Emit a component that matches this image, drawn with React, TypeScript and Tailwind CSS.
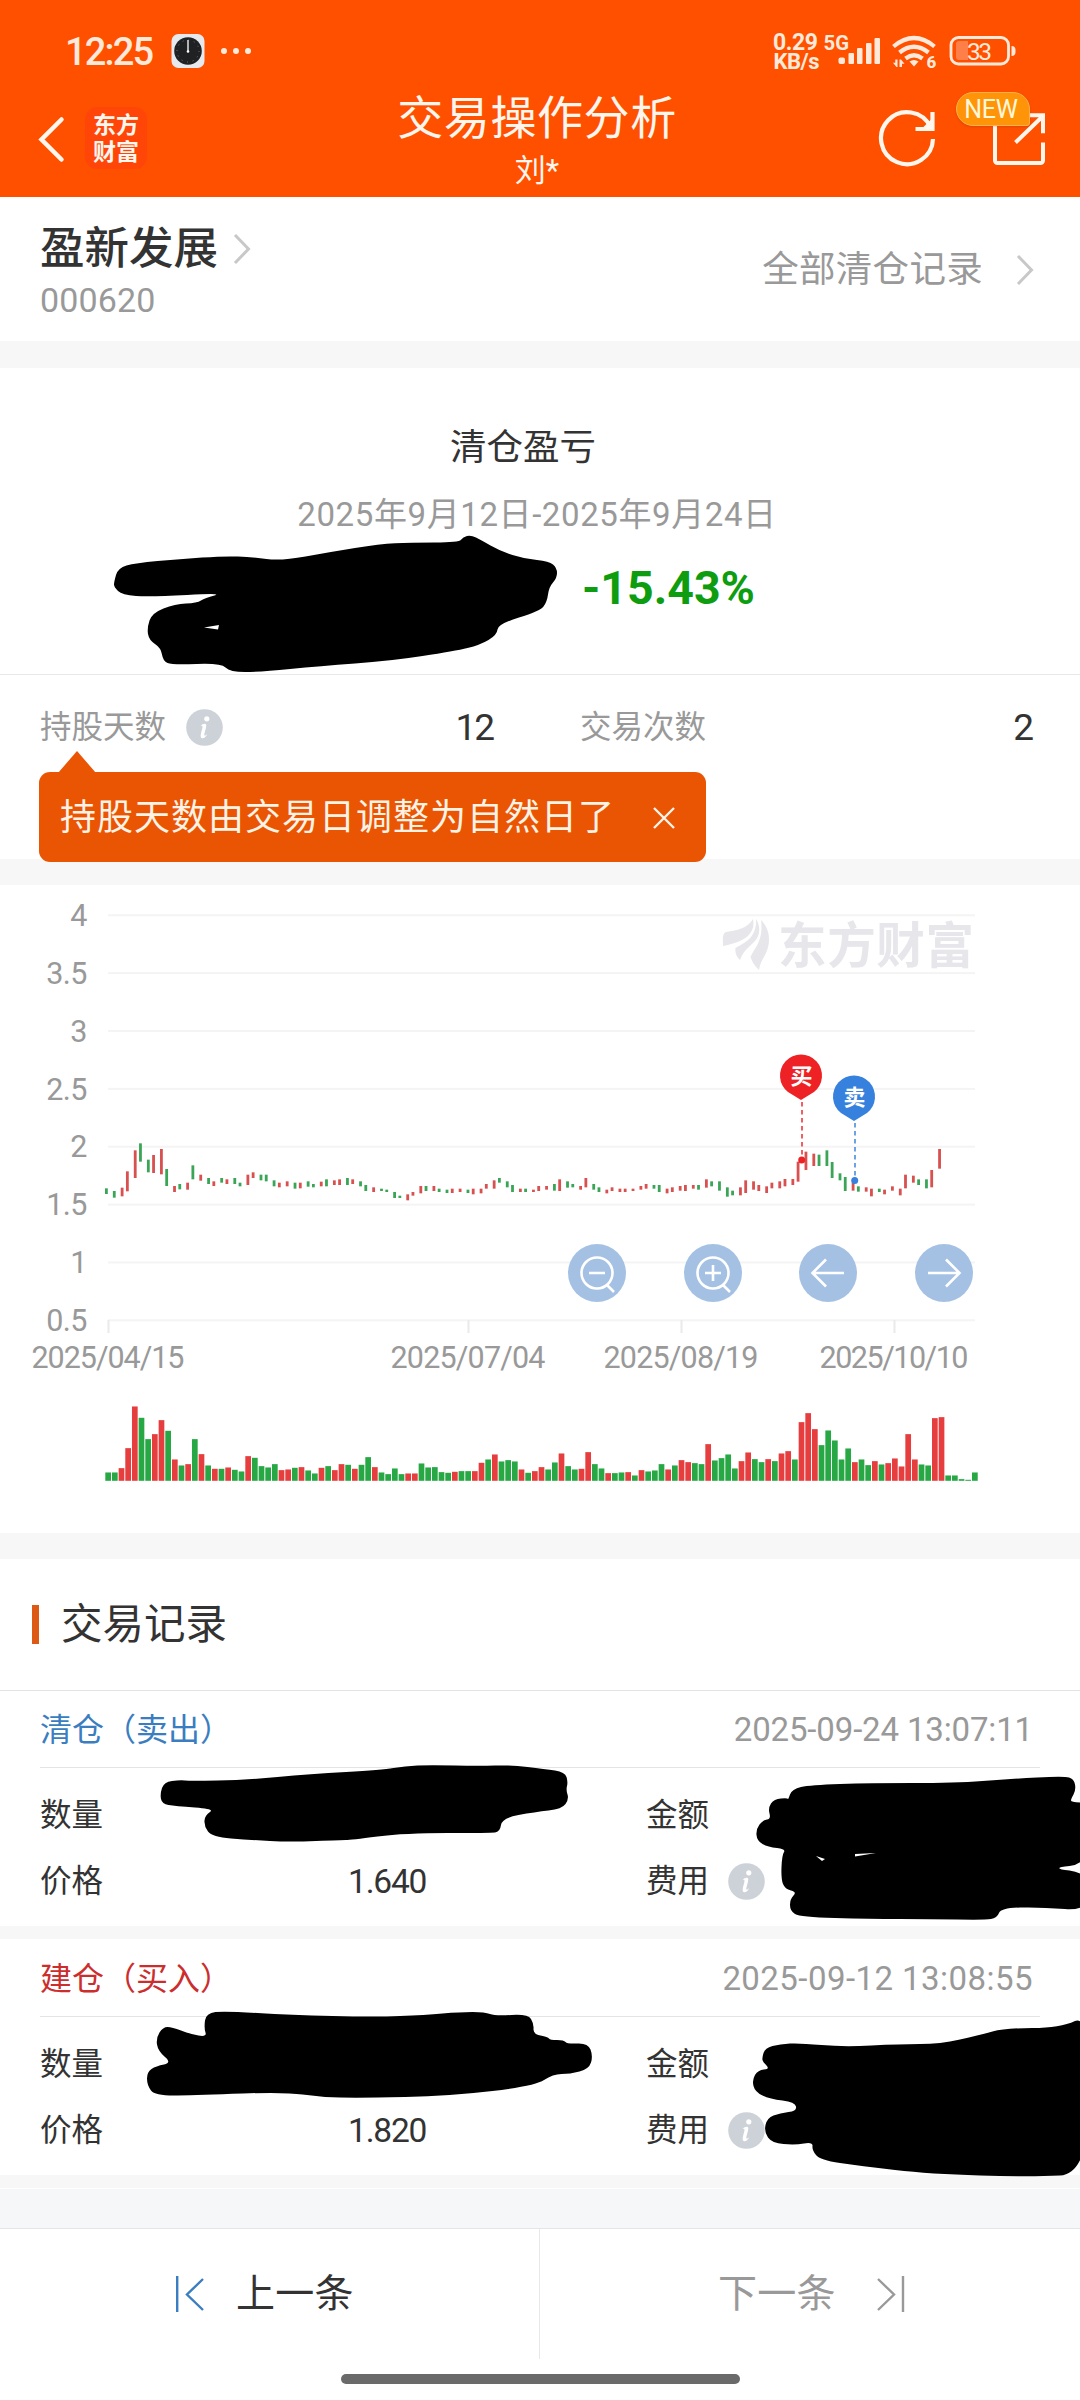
import type { ReactNode } from 'react';

const UP = '#e63e3f';
const DOWN = '#28a745';

// "top-bottom" of each daily candle, in thirds of a pixel below y = 1120; r = up, g = down
const candles =
  'g205-222 g213-233 r203-229 r154-214 r91-174 g70-125 g119-157 r105-159 r87-163 g147-198 r198-216 g192-208 r188-209 g136-178 r164-182 ' +
  'g174-192 r184-198 g174-188 r178-192 g174-192 g188-199 r164-195 r157-174 g164-181 g164-184 g181-199 r188-202 r184-199 g188-206 r188-205 ' +
  'g184-200 g192-202 r185-199 g178-199 r181-195 r178-195 g174-195 r178-192 g184-199 g195-213 r202-216 g206-213 g209-216 g216-234 g227-234 ' +
  'r223-241 r216-227 r198-220 g198-213 r198-213 g206-216 g209-219 r206-219 r206-216 g209-219 r206-223 r206-220 r192-206 r181-206 g174-188 ' +
  'g184-202 g195-216 r206-216 g206-216 r209-216 r198-213 r198-209 g192-212 r178-213 g184-203 g192-202 r198-209 r174-202 g192-209 g202-216 ' +
  'r209-220 r202-213 r206-216 r206-216 r206-213 r198-209 r192-206 g195-206 g195-216 r206-220 r202-216 r198-212 r195-213 r195-206 g195-209 ' +
  'r178-203 g184-199 g184-212 g202-230 g212-226 r202-226 r181-219 r184-209 r195-213 r199-219 r188-205 r184-205 r177-199 r177-195 r125-185 ' +
  'r95-150 r101-138 g104-138 g91-138 g126-174 g160-181 g171-213 r188-212 g199-215 r202-215 r206-229 g206-216 r209-223 r199-212 r206-226 ' +
  'r164-205 r167-188 g178-195 g178-205 r150-202 r87-146';

// volume of each day, in thirds of a pixel
const volumes =
  'g25 g25 r38 r98 r223 g189 g125 r140 r182 g150 r64 g46 r50 g125 r80 g46 r36 g36 r40 g33 g28 r74 g69 g44 g40 g50 r32 r34 g39 r41 g31 g22 ' +
  'r39 g44 r32 r50 g48 r36 g48 g71 r41 g25 g20 g37 g20 r22 r22 g52 g40 g41 g26 g24 r27 g29 g29 r29 r54 g64 r79 g58 g62 g58 r34 g24 r29 r41 ' +
  'g34 g55 r82 g44 g34 r36 r86 g50 g37 r23 g23 g25 r26 g16 r32 g28 g31 g50 r34 g46 r62 r56 g53 g50 r110 g61 g68 g79 g37 r59 r85 g65 g56 ' +
  'r65 g59 r82 r89 g64 r176 r203 r155 g107 g151 g121 g64 g97 r56 g64 g47 r59 g49 r53 r67 r43 r140 r64 g49 g46 r188 r191 g16 g16 g5 g3 g25';

const yTicks = ['4', '3.5', '3', '2.5', '2', '1.5', '1', '0.5'];
const xTicks = [
  { x: 108, label: '2025/04/15', length: 153 },
  { x: 468, label: '2025/07/04', length: 155 },
  { x: 681, label: '2025/08/19', length: 155 },
  { x: 894, label: '2025/10/10', length: 149 },
];

const records = [
  {
    title: '清仓（卖出）',
    time: '2025-09-24 13:07:11',
    price: '1.640',
    titleClass: 'text-[#3a7dc0]',
    timeClass: 'tracking-[-0.150px]',
    headClass: 'h-[77px]',
  },
  {
    title: '建仓（买入）',
    time: '2025-09-12 13:08:55',
    price: '1.820',
    titleClass: 'text-[#cc2d2d]',
    timeClass: 'tracking-[0.450px]',
    headClass: 'h-[78px]',
  },
];

// hand-drawn strokes covering private numbers, as outline points
const scribbles = [
  '114,582 118,568 135,563 180,559 224,556 252,557 281,561 330,552 380,544 410,542.5 459,542.5 463,537 471,535 481,540 500,551 525,559 549,561 557,568 557,578 549,587 547,602 540,611 498,624 497,635 480,645 455,651 390,661 320,666 260,672 230,672 221,663 172,665 163,661 161,648 149,640 147,628 152,613 175,604 197,603 205,598 224,593 150,597 122,595 114,587',
  '160,1794 164,1782 180,1780 190,1781 245,1780 310,1774 382,1770 405,1766 430,1765 480,1766 510,1765 545,1769 565,1772 568,1782 566,1790 569,1799 562,1809 535,1812 502,1818 500,1832 490,1833 405,1833 350,1840 342,1840 290,1842 250,1840 212,1837 204,1826 205,1815 215,1809 175,1806 162,1804',
  '788,1800 792,1789 810,1785 870,1783 955,1783 1010,1779 1064,1776 1074,1779 1076,1790 1071,1799 1071,1802 1090,1803 1090,1864 1049,1868 1090,1873 1090,1911 1040,1907 1001,1908 997,1918 985,1920 930,1919 870,1919 800,1917 790,1911 790,1899 797,1892 785,1889 781,1879 782,1855 786,1849 768,1847 757,1841 756,1829 763,1820 771,1819 768,1808 774,1799 788,1798',
  '204,2028 206,2013 225,2011 290,2015 375,2017 425,2015 460,2012 485,2012 495,2016 528,2014 534,2024 533,2034 548,2037 550,2040 564,2040 567,2044 588,2043 593,2056 589,2069 570,2074 553,2074 535,2086 450,2096 360,2098 320,2097 285,2092 200,2095 155,2096 147,2085 147,2072 156,2066 172,2063 158,2051 156,2038 163,2027 172,2027 190,2034 207,2037',
  '762,2058 765,2048 780,2044 800,2043 843,2047 900,2044 940,2044 980,2035 1005,2028 1060,2028 1090,2014 1090,2174 1030,2177 930,2174 860,2166 820,2160 812,2150 813,2142 795,2145 772,2143 764,2132 767,2118 780,2113 797,2111 795,2102 770,2099 755,2092 752,2080 758,2070 770,2069 763,2062',
];

// rounds the outline off by running curves through the middle of each edge
function smooth(points: string) {
  const p = points.split(' ').map((s) => s.split(',').map(Number));
  const mid = (a: number[], b: number[]) => `${(a[0] + b[0]) / 2} ${(a[1] + b[1]) / 2}`;
  let d = `M${mid(p[p.length - 1], p[0])}`;
  p.forEach((pt, i) => {
    d += `Q${pt[0]} ${pt[1]} ${mid(pt, p[(i + 1) % p.length])}`;
  });
  return d + 'Z';
}

function StatusBar() {
  return (
    <div className="flex h-[92px] items-center pl-[65px] pr-[64px] pt-2.5 text-[#ffe9da]">
      <span className="w-[106px] pt-0.5 text-[38px] font-medium leading-none tracking-[-1.800px]">12:25</span>
      <svg width="80" height="36" viewBox="0 0 80 36">
        <rect x="0.5" y="1" width="33" height="34" rx="7" fill="#e6e9ee" />
        <circle cx="17" cy="18" r="13.8" fill="#1f2122" />
        <circle cx="17" cy="18" r="11" fill="none" stroke="#8a8a8a" strokeWidth="1" strokeDasharray="0.8 4.96" />
        <path d="M17 7v12" stroke="#d8d8d8" strokeWidth="1.6" />
        <circle cx="17" cy="18.5" r="1.3" fill="#fff" />
        <g fill="#ffe9da">
          <circle cx="53" cy="18" r="3" />
          <circle cx="65" cy="18" r="3" />
          <circle cx="77" cy="18" r="3" />
        </g>
      </svg>
      <svg className="ml-auto" width="246" height="60" viewBox="770 21 246 60" fill="#ffe9da">
        <text x="773" y="49.500" fontSize="23" fontWeight="700" textLength="45">0.29</text>
        <text x="773.500" y="68.500" fontSize="22" fontWeight="700" textLength="46">KB/s</text>
        <text x="823.500" y="50" fontSize="21" fontWeight="700" textLength="25.500" lengthAdjust="spacingAndGlyphs">5G</text>
        <rect x="838.500" y="57.500" width="6.500" height="6.500" rx="2" />
        <rect x="848.500" y="53" width="5.500" height="11" rx="1" />
        <rect x="857" y="48" width="5.500" height="16" rx="1" />
        <rect x="866" y="43" width="5.500" height="21" rx="1" />
        <rect x="874.500" y="38" width="5.500" height="26" rx="1" />
        <g fill="none" stroke="#ffe9da" strokeWidth="4.200">
          <path d="M893.500 46.500q20.500-17 41 0" />
          <path d="M899.500 52.500q14.500-11.500 29 0" />
          <path d="M905.500 58.500q8.500-6.500 17 0" />
        </g>
        <path d="M909.500 61.500q4.500-3 9 0l-4.500 5z" />
        <path d="M895.300 59.500h2.200v7.500h-1l-3.500-4.200h2.300zM899.500 59.500h1.500l3.500 4.200h-2.500v3.300h-2.500z" />
        <text x="926.500" y="68" fontSize="17" fontWeight="800">6</text>
        <rect x="951" y="37.500" width="57.500" height="26.500" rx="7.500" fill="none" stroke="#ffe9da" strokeWidth="2.800" />
        <path d="M959 41h9v19h-9a3 3 0 0 1-3-3v-13a3 3 0 0 1 3-3z" fill="#ff7f49" />
        <text x="979.500" y="59.500" fontSize="24.500" textAnchor="middle" textLength="25">33</text>
        <path d="M1011.500 46a4 4 0 0 1 4 4v2a4 4 0 0 1-4 4z" />
      </svg>
    </div>
  );
}

function Header() {
  return (
    <header className="h-[197px] bg-[#ff5000] text-[#fff6ee]">
      <StatusBar />
      <div className="flex h-[105px] justify-between pl-[37px] pr-[23px]">
        <div className="flex w-[220px] items-start gap-[19px] pt-[15px]">
          <svg className="mt-2" width="29" height="48" viewBox="0 0 29 48" fill="none" stroke="#fff6ee" strokeWidth="4.500" strokeLinecap="round">
            <path d="M24.500 4.500L4.500 24.500L24.500 44.500" />
          </svg>
          <div className="flex h-[62px] w-[62px] flex-col items-center justify-center rounded-xl bg-[#ff4608] pt-0.5 text-[23px] font-bold leading-[27px]">
            <span>东方</span>
            <span>财富</span>
          </div>
        </div>
        <div className="flex flex-col items-center">
          <h1 className="h-[56px] pt-px text-[46px] leading-[50px] tracking-[0.600px]">交易操作分析</h1>
          <div className="text-[31px] leading-[46px]">刘*</div>
        </div>
        <div className="flex w-[240px] items-start justify-end gap-[53px]">
          <svg className="mt-4" width="60" height="60" viewBox="875 108 60 60" fill="none" stroke="#fff6ee" strokeWidth="4.200">
            <path d="M931 139A26 26 0 1 1 928.500 127" />
            <path d="M930.500 112v17h-17" />
            <path d="M919 129.500h12v-12z" fill="#fff6ee" stroke="none" />
          </svg>
          <div className="relative mr-[9px] mt-4 h-[60px] w-[58px]">
            <svg width="58" height="60" viewBox="990 108 58 60" fill="none" stroke="#fff6ee" strokeWidth="4">
              <path d="M1010 115h-15v45.500a2.500 2.500 0 0 0 2.500 2.500h43a2.500 2.500 0 0 0 2.500-2.500v-18" />
              <path d="M1015.500 142.500L1043 116M1023 115.200h20v18" />
            </svg>
            <span className="absolute -top-4 left-[-34px] flex h-[34px] w-[74px] items-center justify-center rounded-[17px] rounded-br-[3px] border border-[#ffb04a] bg-[#ff9408] pr-1 text-[25px] leading-none tracking-[-0.300px] text-[#fff8d8] shadow-sm">
              NEW
            </span>
          </div>
        </div>
      </div>
    </header>
  );
}

function Chevron({ className = '' }: { className?: string }) {
  return (
    <svg className={className} width="18" height="32" viewBox="0 0 18 32" fill="none" stroke="#c8c8c8" strokeWidth="3">
      <path d="M2 2l13.500 14L2 30" />
    </svg>
  );
}

function InfoIcon({ className = '' }: { className?: string }) {
  return (
    <svg className={className} width="37" height="37" viewBox="0 0 37 37">
      <circle cx="18.500" cy="18.500" r="18.300" fill="#cdd1d8" />
      <circle cx="20.800" cy="9.800" r="2.600" fill="#fff" />
      <path d="M14.300 17.200c2-1.900 4.300-2.800 5.400-2.100 1 .6.600 2.300.1 4.300-.8 3.100-2 6.300-1.200 7.100.6.500 1.700-.5 2.600-1.500-1 2.600-3 4.500-4.900 4.300-2.200-.3-1.700-3.200-1.200-5.300.7-2.900 1.700-5.700 1.300-6.700-.3-.7-1.200-.4-2.100-.1z" fill="#fff" />
    </svg>
  );
}

function StatsRow() {
  return (
    <div className="relative flex h-[184px] items-start pl-10 pr-[46px] pt-[31px] text-[31.500px] leading-[44px] text-[#999]">
      <span className="w-[126px]">持股天数</span>
      <InfoIcon className="ml-5 mt-[3px]" />
      <span className="flex-1 text-right text-[37px] tracking-[-2px] text-[#333]">12</span>
      <span className="ml-[87px]">交易次数</span>
      <span className="w-[328px] text-right text-[37px] text-[#333]">2</span>
      <div className="absolute left-[39px] top-[97px] flex h-[90px] w-[667px] items-center justify-between rounded-[11px] bg-[#ea5504] pl-[21px] pr-[31px] pt-px text-[36px] tracking-[1px] text-[#fff3e6]">
        <svg className="absolute -top-[21px] left-[19px]" width="38" height="22" viewBox="0 0 38 22">
          <path d="M0 22L19 0l19 22z" fill="#ea5504" />
        </svg>
        <span>持股天数由交易日调整为自然日了</span>
        <svg width="22" height="22" viewBox="0 0 22 22" stroke="#fff3e6" strokeWidth="2.400">
          <path d="M1 1l20 20M21 1L1 21" />
        </svg>
      </div>
    </div>
  );
}

function Pin({ x, y, color, dotY, children }: { x: number; y: number; color: string; dotY: number; children: ReactNode }) {
  return (
    <g>
      <path d={`M${x + 1} ${y + 26}V${dotY}`} stroke={color} strokeWidth="1.800" strokeDasharray="4.500 3.500" opacity="0.8" />
      <path d={`M${x} ${y + 24}L${x - 13} ${y + 16}A21 21 0 1 1 ${x + 13} ${y + 16}Z`} fill={color} />
      <circle cx={x + 0.7} cy={dotY} r="3.500" fill={color} />
      <text x={x + 0.5} y={y + 8} fontSize="22" fontWeight="700" textAnchor="middle" fill="#fff">{children}</text>
    </g>
  );
}

function PriceChart() {
  const buttons = [
    { x: 597, icon: <path d="M-8 0H8M10 12L17 19M15.500 0A15.500 15.500 0 1 1-15.500 0A15.500 15.500 0 1 1 15.500 0" /> },
    { x: 713, icon: <path d="M-8 0H8M0-8V8M10 12L17 19M15.500 0A15.500 15.500 0 1 1-15.500 0A15.500 15.500 0 1 1 15.500 0" /> },
    { x: 828, icon: <path d="M16 0H-15M-2-13.500L-15.500 0L-2 13.500" /> },
    { x: 944, icon: <path d="M-16 0H15M2-13.500L15.500 0L2 13.500" /> },
  ];
  return (
    <svg className="block" width="1080" height="648" viewBox="0 885 1080 648">
      {yTicks.map((label, i) => (
        <g key={label}>
          <rect x="108" y={914.3 + i * 57.86} width="867" height="2" fill="#f4f4f5" />
          <text x="87" y={926 + i * 57.86} fontSize="30.500" letterSpacing="-0.500" textAnchor="end" fill="#999">{label}</text>
        </g>
      ))}
      {xTicks.map((t) => (
        <g key={t.label}>
          <rect x={t.x - 0.5} y="1320" width="2" height="13" fill="#eaeaea" />
          <text x={t.x} y="1368" fontSize="30.500" textAnchor="middle" textLength={t.length} fill="#999">{t.label}</text>
        </g>
      ))}

      {/* watermark */}
      <g fill="#e6e6eb">
        <path d="M723 946C723 938 722 934 726 932C738 930 748 928 753 919C756 934 744 942 723 946Z" />
        <path d="M756 919C761 927 760 935 755 941C748 948 743 951 740 960C736 956 735 952 735.500 948C747 942 757 936 756 919Z" />
        <path d="M761 920C770 929 771 942 766 953C763 959 760 963 759 970C755 966 752 962 750.500 957C754 948 764 941 761 920Z" />
        <text x="778" y="963" fontSize="48.500" fontWeight="700" textLength="196">东方财富</text>
      </g>

      {candles.split(' ').map((c, i) => {
        const [top, bottom] = c.slice(1).split('-').map(Number);
        return (
          <rect
            key={i}
            x={105 + 2.62 * Math.ceil(2.538 * i)}
            y={1120 + top / 3}
            width="2.800"
            height={(bottom - top) / 3}
            fill={c[0] === 'r' ? '#d8504f' : '#3ba557'}
          />
        );
      })}

      {volumes.split(' ').map((v, i) => {
        const h = Number(v.slice(1)) / 3;
        return <rect key={i} x={105.300 + 6.667 * i} y={1480.800 - h} width="5.700" height={h} fill={v[0] === 'r' ? UP : DOWN} />;
      })}

      <Pin x={801} y={1076} dotY={1160} color="#ee2224">买</Pin>
      <Pin x={854} y={1097} dotY={1180.500} color="#3680de">卖</Pin>

      {buttons.map((b) => (
        <g key={b.x} transform={`translate(${b.x} 1273)`}>
          <circle r="29" fill="#9fbee1" opacity="0.95" />
          <g fill="none" stroke="#fff" strokeWidth="2.600">{b.icon}</g>
        </g>
      ))}
    </svg>
  );
}

function RecordCard({ record }: { record: (typeof records)[number] }) {
  return (
    <div className="text-[31.500px] leading-[66px] text-[#333]">
      <div className={`mx-10 flex items-center justify-between border-b border-[#e4e4e4] pr-[7px] pt-0.5 ${record.headClass}`}>
        <span className={`text-[32px] ${record.titleClass}`}>{record.title}</span>
        <span className={`text-[33px] text-[#999] ${record.timeClass}`}>{record.time}</span>
      </div>
      <div className="flex h-[66px] pl-10 pt-[15px]">
        <span className="w-[606px]">数量</span>
        <span>金额</span>
      </div>
      <div className="flex h-[92px] pl-10 pt-[15px]">
        <span className="w-[308px]">价格</span>
        <span className="w-[298px] text-[33.500px] tracking-[-1.200px]">{record.price}</span>
        <span className="w-[63px]">费用</span>
        <InfoIcon className="ml-[19px] mt-[14px]" />
      </div>
    </div>
  );
}

function Footer() {
  return (
    <footer className="h-[171px] border-t border-[#e3e5e8] bg-white">
      <div className="flex h-[130px] text-[39px]">
        <button className="flex w-1/2 items-center gap-8 border-r border-[#e8e8e8] pl-[176px] tracking-[0.300px] text-[#333]">
          <svg width="28" height="38" viewBox="0 0 28 38" fill="none" stroke="#3a7dc0" strokeWidth="2.400">
            <path d="M1.200 1v36M27 4L11 19.500L27 35" />
          </svg>
          上一条
        </button>
        <button className="flex w-1/2 items-center gap-[41px] pl-[178px] tracking-[0.300px] text-[#999]">
          下一条
          <svg width="28" height="38" viewBox="0 0 28 38" fill="none" stroke="#999" strokeWidth="2.400">
            <path d="M26 1v36M1 4l16 15.500L1 35" />
          </svg>
        </button>
      </div>
      <div className="mx-auto mt-[15px] h-2.5 w-[399px] rounded-full bg-[#6a6a6a]" />
    </footer>
  );
}

export default function App() {
  return (
    <div className="relative h-[2400px] w-[1080px] overflow-hidden bg-white font-['Roboto','Noto_Sans_CJK_SC',sans-serif]">
      <Header />

      <section className="flex h-[144px] items-center justify-between pl-10 pr-[46px]">
        <div className="flex flex-col pt-2.5">
          <div className="flex items-center gap-[15px] text-[44.500px] font-medium leading-[52px] text-[#333]">
            盈新发展
            <Chevron />
          </div>
          <div className="text-[34px] leading-[50px] tracking-[0.150px] text-[#999]">000620</div>
        </div>
        <div className="flex items-center gap-[33px] pt-0.5 text-[36.500px] tracking-[0.300px] text-[#999]">
          全部清仓记录
          <Chevron />
        </div>
      </section>
      <div className="h-[27px] bg-[#f7f7f7]" />

      <section className="flex h-[307px] flex-col items-center border-b border-[#e8e8e8] pr-[34px] pt-[54px]">
        <h2 className="pt-px text-[36.500px] leading-[50px] text-[#333]">清仓盈亏</h2>
        <div className="mt-[18px] pl-7 text-[33px] leading-[48px] tracking-[0.600px] text-[#999]">2025年9月12日-2025年9月24日</div>
        <div className="ml-[291px] mt-[24px] text-[46.500px] font-bold leading-[50px] text-[#0e9d10]">-15.43%</div>
      </section>
      <StatsRow />
      <div className="h-[26px] bg-[#f7f7f7]" />

      <PriceChart />
      <div className="h-[26px] bg-[#f7f7f7]" />

      <section>
        <div className="flex h-[132px] items-center gap-[22px] border-b border-[#e4e4e4] pl-8 text-[41.500px] text-[#333]">
          <div className="h-[39px] w-[7px] bg-[#dd5a14]" />
          <h2 className="pt-0.5">交易记录</h2>
        </div>
        <RecordCard record={records[0]} />
        <div className="h-[13px] bg-[#f7f7f7]" />
        <RecordCard record={records[1]} />
        <div className="h-[13px] bg-[#f7f7f7]" />
      </section>
      <div className="h-[40px] border-t border-white bg-[#f6f7f9]" />
      <Footer />

      <svg className="pointer-events-none absolute left-0 top-0" width="1080" height="2400" viewBox="0 0 1080 2400">
        {scribbles.map((s, i) => (
          <path key={i} d={smooth(s)} />
        ))}
        <g fill="#fff">
          <path d="M204 627.500L219 625L218 629.500Z" />
          <path d="M816 1856L825 1859L822 1861Z" />
          <path d="M855 1854L876 1853L855 1856.500Z" />
        </g>
      </svg>
    </div>
  );
}
